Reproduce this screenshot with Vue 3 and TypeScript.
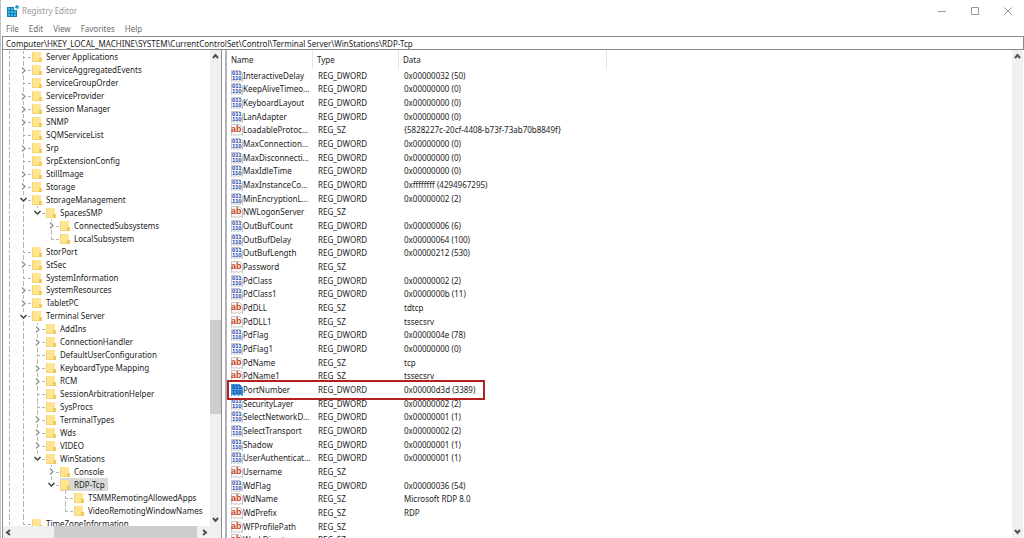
<script setup lang="ts">
type Toggle = 'open' | 'closed' | 'none'
interface TreeNode { level: number; toggle: Toggle; name: string; last: boolean }
interface RegValue { name: string; type: 'REG_DWORD' | 'REG_SZ'; data: string }

const n = (level: number, toggle: Toggle, name: string, last = false): TreeNode =>
  ({ level, toggle, name, last })

const tree: TreeNode[] = [
  n(0, 'none', 'Server Applications'),
  n(0, 'closed', 'ServiceAggregatedEvents'),
  n(0, 'none', 'ServiceGroupOrder'),
  n(0, 'closed', 'ServiceProvider'),
  n(0, 'closed', 'Session Manager'),
  n(0, 'closed', 'SNMP'),
  n(0, 'none', 'SQMServiceList'),
  n(0, 'closed', 'Srp'),
  n(0, 'none', 'SrpExtensionConfig'),
  n(0, 'closed', 'StillImage'),
  n(0, 'closed', 'Storage'),
  n(0, 'open', 'StorageManagement'),
  n(1, 'open', 'SpacesSMP', true),
  n(2, 'closed', 'ConnectedSubsystems'),
  n(2, 'none', 'LocalSubsystem', true),
  n(0, 'none', 'StorPort'),
  n(0, 'closed', 'StSec'),
  n(0, 'none', 'SystemInformation'),
  n(0, 'closed', 'SystemResources'),
  n(0, 'closed', 'TabletPC'),
  n(0, 'open', 'Terminal Server'),
  n(1, 'closed', 'AddIns'),
  n(1, 'closed', 'ConnectionHandler'),
  n(1, 'none', 'DefaultUserConfiguration'),
  n(1, 'closed', 'KeyboardType Mapping'),
  n(1, 'closed', 'RCM'),
  n(1, 'none', 'SessionArbitrationHelper'),
  n(1, 'none', 'SysProcs'),
  n(1, 'closed', 'TerminalTypes'),
  n(1, 'closed', 'Wds'),
  n(1, 'closed', 'VIDEO'),
  n(1, 'open', 'WinStations', true),
  n(2, 'closed', 'Console'),
  n(2, 'open', 'RDP-Tcp', true),
  n(3, 'none', 'TSMMRemotingAllowedApps'),
  n(3, 'none', 'VideoRemotingWindowNames', true),
  n(0, 'none', 'TimeZoneInformation'),
]

const dw = (name: string, data: string): RegValue => ({ name, type: 'REG_DWORD', data })
const sz = (name: string, data = ''): RegValue => ({ name, type: 'REG_SZ', data })

const values: RegValue[] = [
  dw('InteractiveDelay', '0x00000032 (50)'),
  dw('KeepAliveTimeo...', '0x00000000 (0)'),
  dw('KeyboardLayout', '0x00000000 (0)'),
  dw('LanAdapter', '0x00000000 (0)'),
  sz('LoadableProtoc...', '{5828227c-20cf-4408-b73f-73ab70b8849f}'),
  dw('MaxConnection...', '0x00000000 (0)'),
  dw('MaxDisconnecti...', '0x00000000 (0)'),
  dw('MaxIdleTime', '0x00000000 (0)'),
  dw('MaxInstanceCo...', '0xffffffff (4294967295)'),
  dw('MinEncryptionL...', '0x00000002 (2)'),
  sz('NWLogonServer'),
  dw('OutBufCount', '0x00000006 (6)'),
  dw('OutBufDelay', '0x00000064 (100)'),
  dw('OutBufLength', '0x00000212 (530)'),
  sz('Password'),
  dw('PdClass', '0x00000002 (2)'),
  dw('PdClass1', '0x0000000b (11)'),
  sz('PdDLL', 'tdtcp'),
  sz('PdDLL1', 'tssecsrv'),
  dw('PdFlag', '0x0000004e (78)'),
  dw('PdFlag1', '0x00000000 (0)'),
  sz('PdName', 'tcp'),
  sz('PdName1', 'tssecsrv'),
  dw('PortNumber', '0x00000d3d (3389)'),
  dw('SecurityLayer', '0x00000002 (2)'),
  dw('SelectNetworkD...', '0x00000001 (1)'),
  dw('SelectTransport', '0x00000002 (2)'),
  dw('Shadow', '0x00000001 (1)'),
  dw('UserAuthenticat...', '0x00000001 (1)'),
  sz('Username'),
  dw('WdFlag', '0x00000036 (54)'),
  sz('WdName', 'Microsoft RDP 8.0'),
  sz('WdPrefix', 'RDP'),
  sz('WFProfilePath'),
  sz('WorkDirectory'),
]

const menus = ['File', 'Edit', 'View', 'Favorites', 'Help']
const address = 'Computer\\HKEY_LOCAL_MACHINE\\SYSTEM\\CurrentControlSet\\Control\\Terminal Server\\WinStations\\RDP-Tcp'
const columns = ['Name', 'Type', 'Data']
</script>

<template>
  <div class="window">
    <header class="titlebar">
      <svg class="app-icon" viewBox="0 0 12 12" aria-hidden="true">
        <path d="M0 2h7v3h3v7H0z" fill="#167fae" />
        <path d="M1 3h2v2H1zM4 3h2v2H4zM1 6h2v2H1zM4 6h2v2H4zM1 9h2v2H1zM4 9h2v2H4zM7 6h2v2H7zM7 9h2v2H7z" fill="#3dbdec" />
        <path d="M9 0l3 1-1 3-3-1z" fill="#2498c8" />
      </svg>
      <h1 class="title">Registry Editor</h1>
      <div class="controls">
        <button type="button" aria-label="Minimize"><svg viewBox="0 0 8 8"><path d="M0 4.500h8" /></svg></button>
        <button type="button" aria-label="Maximize"><svg viewBox="0 0 8 8"><path d="M.5.5h7v7h-7z" /></svg></button>
        <button type="button" aria-label="Close"><svg viewBox="0 0 8 8"><path d="M.5.5l7 7M7.5.5l-7 7" /></svg></button>
      </div>
    </header>

    <nav class="menubar" aria-label="Menu">
      <button v-for="m in menus" :key="m" type="button">{{ m }}</button>
    </nav>

    <input class="address" type="text" aria-label="Address" :value="address" spellcheck="false" />

    <main class="body">
      <section class="tree-pane">
        <div class="tree-row">
          <div class="tree-clip">
            <ul class="tree" aria-label="Registry keys">
              <li v-for="node in tree" :key="node.name" class="node">
                <span class="rail"></span>
                <span v-for="i in node.level" :key="i" class="rail" :class="{ blank: i > 1 }"></span>
                <span class="joint" :class="{ last: node.last }">
                  <button v-if="node.toggle !== 'none'" type="button" class="twisty" :aria-label="'Toggle ' + node.name">
                    <svg v-if="node.toggle === 'closed'" viewBox="0 0 9 9"><path d="M3 1.500l3 3-3 3" stroke="#8c8c8c" stroke-width="1.200" /></svg>
                    <svg v-else viewBox="0 0 9 9"><path d="M1.500 3l3 3 3-3" stroke="#404040" stroke-width="1.500" /></svg>
                  </button>
                </span>
                <span class="key" :class="{ selected: node.name === 'RDP-Tcp' }">
                  <svg class="folder" viewBox="0 0 10 12" aria-hidden="true">
                    <path d="M0 1h9v10H0z" fill="#ffe592" />
                    <path d="M0 1h1v10H0zM0 10h9v1H0z" fill="#f5d676" />
                    <path d="M7 7h3v4H7z" fill="#f2cb55" />
                  </svg>
                  <span>{{ node.name }}</span>
                </span>
              </li>
            </ul>
          </div>
          <div class="scroll vertical tree-scroll">
            <button type="button" aria-label="Scroll up"><svg viewBox="0 0 7 7"><path d="M1 5l2.500-3 2.500 3" /></svg></button>
            <div class="track"><div class="thumb"></div></div>
            <button type="button" aria-label="Scroll down"><svg viewBox="0 0 7 7"><path d="M1 2l2.500 3 2.500-3" /></svg></button>
          </div>
        </div>
        <div class="scroll horizontal">
          <button type="button" aria-label="Scroll left"><svg viewBox="0 0 7 7"><path d="M5 1l-3 2.500 3 2.500" /></svg></button>
          <div class="track"><div class="thumb"></div></div>
          <button type="button" aria-label="Scroll right"><svg viewBox="0 0 7 7"><path d="M2 1l3 2.500-3 2.500" /></svg></button>
        </div>
      </section>

      <section class="list-pane">
        <div class="list-clip">
          <table class="values">
            <thead>
              <tr><th v-for="c in columns" :key="c" scope="col">{{ c }}</th></tr>
            </thead>
            <tbody>
              <tr v-for="v in values" :key="v.name" :class="{ marked: v.name === 'PortNumber' }">
                <td>
                  <svg class="value-icon" viewBox="0 0 12 12" aria-hidden="true">
                    <path class="page" d="M.5.5h8l3 3v8l-2-1-2 1-2-1-2 1-2-1-1 1z" />
                    <g v-if="v.type === 'REG_DWORD'" class="bits">
                      <text x="1" y="5">011</text>
                      <text x="1" y="10">110</text>
                    </g>
                    <text v-else class="chars" x="0" y="8">ab</text>
                  </svg>
                  <span>{{ v.name }}</span>
                </td>
                <td>{{ v.type }}</td>
                <td>{{ v.data }}</td>
              </tr>
            </tbody>
          </table>
        </div>
        <div class="scroll vertical list-scroll">
          <button type="button" aria-label="Scroll up"><svg viewBox="0 0 7 7"><path d="M1 5l2.500-3 2.500 3" /></svg></button>
          <div class="track"><div class="thumb"></div></div>
          <button type="button" aria-label="Scroll down"><svg viewBox="0 0 7 7"><path d="M1 2l2.500 3 2.500-3" /></svg></button>
        </div>
      </section>
    </main>
  </div>
</template>

<style>
body { margin: 0; background: #fff; }
</style>

<style scoped>
.window { position: relative; display: flex; flex-direction: column; height: 100vh; box-sizing: border-box; border-left: 1px solid #c4c4c8; overflow: hidden; background: #fff; color: #1c1c1c; font-family: "Noto Sans", "Open Sans", sans-serif; font-size: 8px; line-height: 12px; }
.window::before { content: ""; position: absolute; left: -1px; top: 0; width: 1px; height: 5px; background: #34488c; }
button { margin: 0; padding: 0; border: 0; background: none; font: inherit; color: inherit; }
svg { display: block; flex: none; fill: none; }
.titlebar { display: flex; align-items: center; height: 21px; padding-left: 6px; }
.app-icon { width: 12px; height: 12px; }
.title { margin: 0 0 0 3px; font-size: 8px; font-weight: 400; color: #999; }
.controls { display: flex; margin-left: auto; }
.controls button { display: grid; place-items: center; width: 33px; height: 21px; }
.controls svg { width: 8px; height: 8px; stroke: #999; }
.menubar { display: flex; gap: 10px; height: 15px; padding-left: 5px; color: #6d6d6d; }
.address { height: 14px; box-sizing: border-box; margin: 0 0 0 1px; padding: 0 3px; border: 1px solid #8a8a8a; outline: 0; background: #fff; color: #1c1c1c; font: inherit; }
.body { flex: 1; display: flex; min-height: 0; }
.tree-pane { flex: none; display: flex; flex-direction: column; width: 220px; box-sizing: border-box; margin-left: 1px; border-left: 1px solid #8a8d94; border-right: 1px solid #8a8d94; }
.tree-row { flex: 1; display: flex; min-height: 0; }
.tree-clip { flex: 1; min-width: 0; overflow: hidden; }
.tree { display: grid; grid-auto-rows: minmax(12px, 1fr); height: calc(100% + 3px); margin: 0; padding: 1px 0 0 6px; list-style: none; }
.node { display: flex; white-space: nowrap; min-height: 0; }
.rail { flex: none; width: 14px; box-sizing: border-box; border-left: 1px dashed #b5b5b5; }
.rail.blank { border-color: transparent; }
.joint { position: relative; flex: none; width: 9px; }
.joint::before { content: ""; position: absolute; left: 0; top: 0; bottom: 0; border-left: 1px dashed #b5b5b5; }
.joint.last::before { bottom: 50%; }
.joint::after { content: ""; position: absolute; left: 0; right: 1px; top: 50%; border-top: 1px dashed #b5b5b5; }
.twisty { position: absolute; z-index: 1; left: -4px; top: 2px; background: #fff; }
.twisty svg { width: 9px; height: 9px; }
.key { display: flex; align-items: center; gap: 4px; padding-right: 3px; }
.folder { width: 10px; height: 12px; }
.selected { background: #d9d9d9; }
.scroll { display: flex; flex: none; background: #f0f0f0; }
.scroll button { display: grid; place-items: center; flex: none; width: 11px; height: 13px; }
.scroll svg { width: 7px; height: 7px; stroke: #505050; stroke-width: 2; }
.track { flex: 1; display: flex; }
.thumb { background: #cdcdcd; }
.vertical { flex-direction: column; width: 11px; }
.vertical .track { flex-direction: column; }
.tree-scroll .thumb { margin-top: 257px; height: 94px; }
.horizontal { height: 12px; padding-right: 11px; }
.horizontal .thumb { width: 143px; margin-left: 40px; }
.list-pane { flex: 1; display: flex; min-width: 0; margin-left: 3px; padding-right: 1px; border-left: 2px solid #b0b2b8; }
.list-clip { flex: 1; min-width: 0; overflow: hidden; }
.values { display: flex; flex-direction: column; height: calc(100% + 9px); }
.values tr { display: grid; grid-template-columns: 86px 86px 208px; align-items: center; }
.values thead tr { height: 19px; }
.values tbody { flex: 1; display: grid; grid-auto-rows: minmax(12px, 1fr); }
th { align-self: stretch; box-sizing: border-box; padding: 4px 0 0 4px; border-right: 1px solid #e5e5e5; font-weight: 400; text-align: left; }
td { padding: 0 0 0 5px; white-space: nowrap; }
td:first-child { display: flex; align-items: center; padding-left: 4px; }
.value-icon { width: 12px; height: 12px; }
.page { fill: #f8f8f8; stroke: #c4c4c4; }
.value-icon text { font-family: "Liberation Sans", sans-serif; font-weight: 700; }
.bits { fill: #2148b8; font-size: 6px; }
.chars { fill: #c8441f; font-size: 9px; }
.marked { position: relative; }
.marked::after { content: ""; position: absolute; left: 0; top: -3px; bottom: -3px; width: 254px; border: 2px solid #b3201f; }
.marked .page { fill: #4aa3ec; stroke: #3b8fdc; }
.marked .bits { fill: #0b3f9c; }
</style>
